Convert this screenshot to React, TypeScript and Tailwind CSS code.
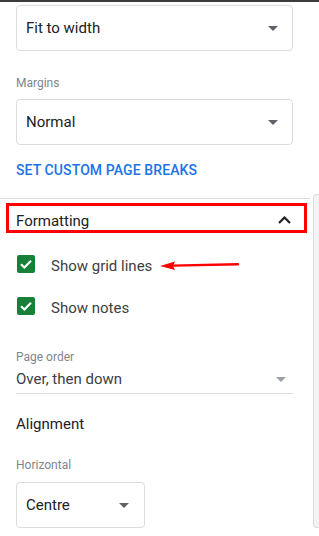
import React from "react";

function Caret({ color = "#5f6368" }: { color?: string }) {
  return (
    <svg width="10" height="5" viewBox="0 0 10 5" className="shrink-0">
      <path d="M0 0 L10 0 L5 5 Z" fill={color} />
    </svg>
  );
}

function Select({ label, className }: { label: string; className: string }) {
  return (
    <div
      className={`flex h-[46px] items-center justify-between rounded-[4px] border border-[#dadce0] bg-white pl-[9px] text-[15px] text-[#202124] ${className}`}
    >
      <span>{label}</span>
      <Caret />
    </div>
  );
}

function Check({ label, className }: { label: string; className?: string }) {
  return (
    <div className={`flex h-[18px] items-center pl-[17px] ${className ?? ""}`}>
      <div className="flex h-[18px] w-[18px] items-center justify-center rounded-[2px] bg-[#188038]">
        <svg width="18" height="18" viewBox="0 0 18 18">
          <path d="M4 9.2 L7.4 12.5 L14 5.8" fill="none" stroke="#ffffff" strokeWidth="2.2" />
        </svg>
      </div>
      <span className="relative top-[2px] ml-[16px] text-[15px] leading-[20px] text-[#3c4043]">{label}</span>
    </div>
  );
}

export default function App() {
  return (
    <div
      className="h-[536px] w-[319px] overflow-hidden bg-white"
      style={{ fontFamily: "Roboto, 'Liberation Sans', sans-serif" }}
    >
      <div className="h-[2px] bg-[#3c3c3c]" />
      <div className="px-[16px] w-[311px]">
        <Select label="Fit to width" className="mt-[3px] w-[277px] pr-[14px]" />
        <div className="mt-[24px] text-[12px] leading-[16px] text-[#80868b]">Margins</div>
        <Select label="Normal" className="mt-[8px] w-[277px] pr-[14px]" />
        <div className="mt-[15px] text-[14px] font-medium leading-[20px] tracking-[0.1px] text-[#1a73e8]">
          SET CUSTOM PAGE BREAKS
        </div>
      </div>
      <div className="mt-[14px] flex">
        <div className="w-[311px]">
          <div className="mt-[4px] border-t border-[#dadce0]">
            <div className="ml-[6px] mt-[4px] flex h-[30px] w-[301px] items-center justify-between border-[3px] border-[#ff0000] pl-[7px] pr-[13px]">
              <span className="relative top-[3px] text-[15px] leading-[20px] text-[#202124]">Formatting</span>
              <svg className="relative top-[2px]" width="13" height="8" viewBox="0 0 13 8">
                <path d="M1 7 L6.5 1.5 L12 7" fill="none" stroke="#202124" strokeWidth="2.2" />
              </svg>
            </div>
            <div className="relative">
              <Check label="Show grid lines" className="mt-[22px]" />
              <svg
                className="absolute left-[158px] top-[3px]"
                width="84"
                height="14"
                viewBox="0 0 84 14"
              >
                <path d="M14 7.6 L80 6.3" stroke="#ff0000" strokeWidth="2.4" fill="none" strokeLinecap="round" />
                <path d="M2 8 L17 3.5 L15 8 L17 12 Z" fill="#ff0000" />
              </svg>
            </div>
            <Check label="Show notes" className="mt-[24px]" />
            <div className="px-[16px]">
              <div className="mt-[34px] text-[12px] leading-[16px] text-[#80868b]">Page order</div>
              <div className="mt-[4px] flex w-[277px] items-center justify-between border-b border-[#dadce0] pb-[4px] pr-[7px]">
                <span className="text-[15px] leading-[20px] text-[#3c4043]">Over, then down</span>
                <Caret color="#9aa0a6" />
              </div>
              <div className="mt-[20px] text-[15px] leading-[20px] text-[#202124]">Alignment</div>
              <div className="mt-[23px] text-[12px] leading-[16px] text-[#80868b]">Horizontal</div>
              <Select label="Centre" className="mt-[9px] w-[129px] pr-[15px]" />
            </div>
          </div>
        </div>
        <div className="ml-[3px] h-[334px] w-[6px] rounded-l-[4px] border border-r-0 border-[#dadce0] bg-[#f1f3f4]" />
      </div>
    </div>
  );
}
